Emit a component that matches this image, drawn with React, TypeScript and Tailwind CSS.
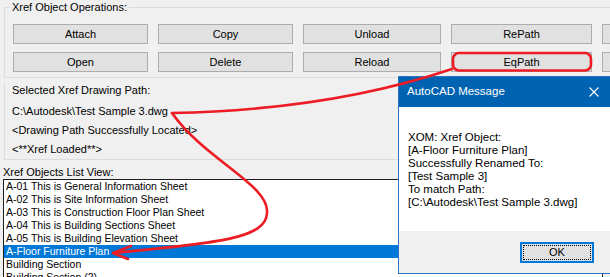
const rows = [
  ["Attach", "Copy", "Unload", "RePath", ""],
  ["Open", "Delete", "Reload", "EqPath", ""],
];
const widths = ["w-[135px]", "w-[135px]", "w-[138px]", "w-[141px]", "w-[135px]"];

const items = [
  "A-01 This is General Information Sheet",
  "A-02 This is Site Information Sheet",
  "A-03 This is Construction Floor Plan Sheet",
  "A-04 This is Building Sections Sheet",
  "A-05 This is Building Elevation Sheet",
  "A-Floor Furniture Plan",
  "Building Section",
  "Building Section (2)",
];

const message = [
  "XOM: Xref Object:",
  "[A-Floor Furniture Plan]",
  "Successfully Renamed To:",
  "[Test Sample 3]",
  "To match Path:",
  "[C:\\Autodesk\\Test Sample 3.dwg]",
];

const MessageBox = () => (
  <div className="absolute left-[398px] top-[76px] w-[230px] h-[198px] border border-[#2b73c2] bg-white">
    <div className="h-[30px] bg-[#0063b1] text-white flex items-center pl-[8px]">
      <div className="w-[182px] text-[11.5px]">AutoCAD Message</div>
      <svg width="10" height="10" viewBox="0 0 10 10">
        <path d="M0.5 0.5 L9.5 9.5 M9.5 0.5 L0.5 9.5" stroke="white" strokeWidth="1.1" />
      </svg>
    </div>
    <div className="h-[124px] bg-white pl-[9px] pt-[24px] leading-[13px] text-[11.5px]">
      {message.map((m) => (
        <div key={m}>{m}</div>
      ))}
    </div>
    <div className="h-[42px] bg-[#f0f0f0] pl-[121px] pt-[11px]">
      <div className="w-[74px] h-[21px] border-2 border-[#0078d7] bg-[#e1e1e1] p-[1px]">
        <div className="h-full border border-dotted border-black flex items-center justify-center">OK</div>
      </div>
    </div>
  </div>
);

const Annotations = () => (
  <svg className="absolute inset-0 pointer-events-none" width="610" height="277" viewBox="0 0 610 277">
    <g fill="none" stroke="#ed1c24" strokeWidth="2.6" strokeLinecap="round" strokeLinejoin="round">
      <rect x="453" y="53" width="138" height="17.5" rx="6" />
      <path d="M452 69 Q330 110 172 113" />
      <path d="M172 113 C205 160 270 185 267 213 C266 238 220 243 113 253" />
      <path d="M113 253 L131 246 M113 253 L128 259" />
    </g>
  </svg>
);

export default function App() {
  return (
    <div className="relative w-[610px] h-[277px] overflow-hidden bg-[#f0f0f0] text-[11px] text-black font-['Liberation_Sans',Arial,sans-serif]">
      <div className="ml-[4px] mt-[7px] w-[700px] h-[71px] border border-r-0 border-[#dcdcdc]">
        <div className="-mt-[8px] ml-[5px] w-fit px-[2px] bg-[#f0f0f0] leading-[14px]">Xref Object Operations:</div>
        <div className="mt-[10px] ml-[8px] flex flex-col gap-[8px]">
          {rows.map((row, r) => (
            <div key={r} className="flex gap-[10px]">
              {row.map((label, i) => (
                <div
                  key={i}
                  className={`${widths[i]} h-[20px] shrink-0 border border-[#adadad] bg-[#e1e1e1] flex items-center justify-center`}
                >
                  {label}
                </div>
              ))}
            </div>
          ))}
        </div>
      </div>

      <div className="ml-[4px] mt-[12px] w-[700px] border-l border-b border-[#dcdcdc]">
        <div className="-mt-[7px] ml-[5px] w-fit px-[2px] leading-[14px]">Selected Xref Drawing Path:</div>
        <div className="mt-[5px] pl-[7px] leading-[19px]">
          <div>C:\Autodesk\Test Sample 3.dwg</div>
          <div>&lt;Drawing Path Successfully Located&gt;</div>
          <div>&lt;**Xref Loaded**&gt;</div>
        </div>
      </div>

      <div className="mt-[5px] ml-[3px] leading-[14px]">Xref Objects List View:</div>
      <div className="ml-[3px] w-[600px] h-[120px] border border-[#1e1e1e] bg-white text-[10.5px]">
        {items.map((it) => (
          <div
            key={it}
            className={`h-[13px] leading-[13px] pl-[2px] ${it === "A-Floor Furniture Plan" ? "bg-[#0078d7] text-white" : ""}`}
          >
            {it}
          </div>
        ))}
      </div>

      <MessageBox />
      <Annotations />
    </div>
  );
}
